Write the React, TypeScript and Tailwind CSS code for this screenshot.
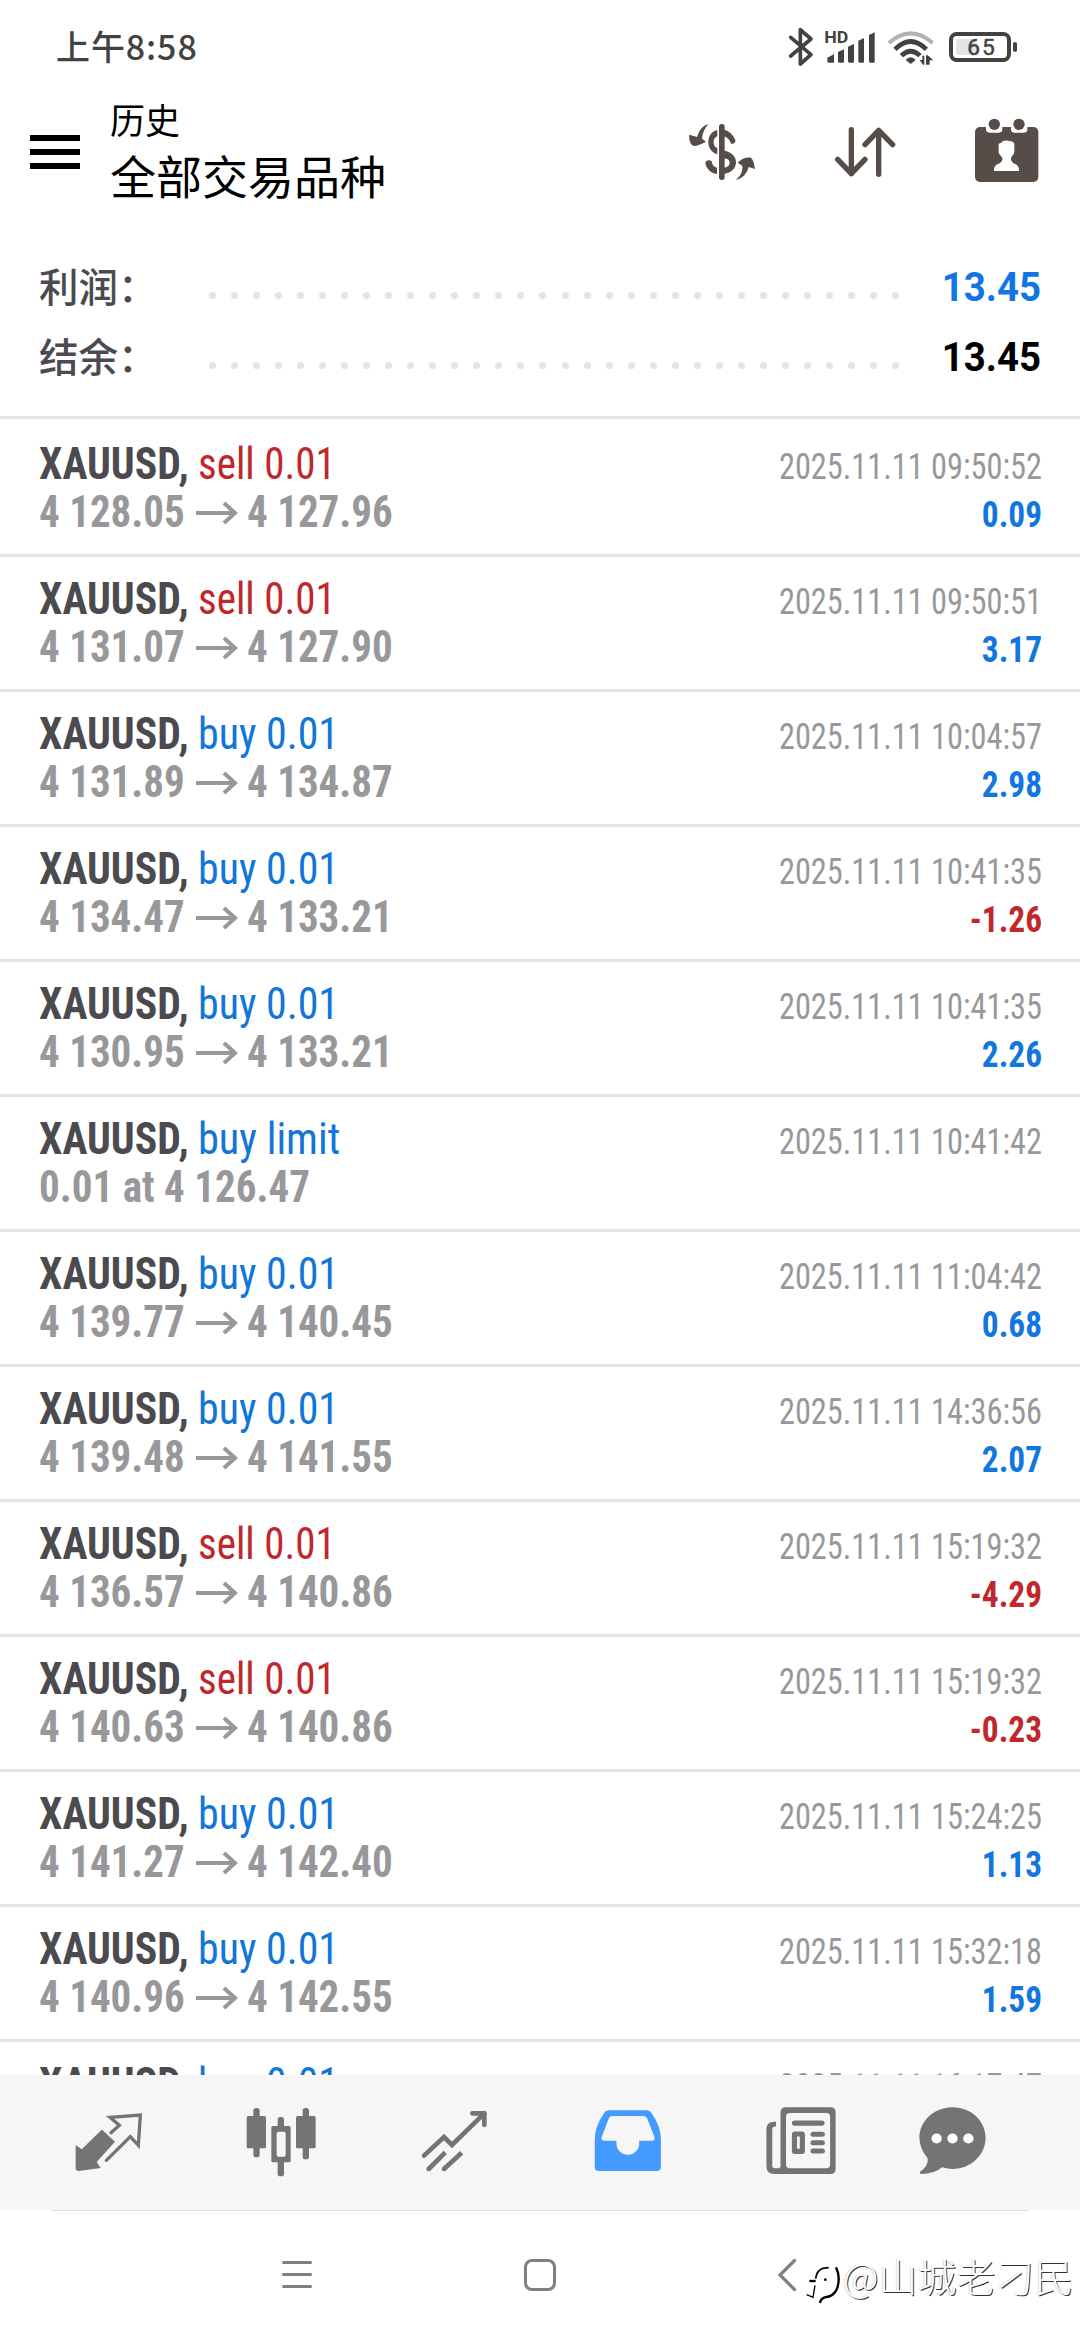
import type { ReactNode } from "react";

type Deal = {
  side: "sell" | "buy";
  label: string;
  from?: string;
  to?: string;
  note?: string;
  time: string;
  profit?: string;
};

const deals: Deal[] = [
  { side: "sell", label: "sell 0.01", from: "4 128.05", to: "4 127.96", time: "2025.11.11 09:50:52", profit: "0.09" },
  { side: "sell", label: "sell 0.01", from: "4 131.07", to: "4 127.90", time: "2025.11.11 09:50:51", profit: "3.17" },
  { side: "buy", label: "buy 0.01", from: "4 131.89", to: "4 134.87", time: "2025.11.11 10:04:57", profit: "2.98" },
  { side: "buy", label: "buy 0.01", from: "4 134.47", to: "4 133.21", time: "2025.11.11 10:41:35", profit: "-1.26" },
  { side: "buy", label: "buy 0.01", from: "4 130.95", to: "4 133.21", time: "2025.11.11 10:41:35", profit: "2.26" },
  { side: "buy", label: "buy limit", note: "0.01 at 4 126.47", time: "2025.11.11 10:41:42" },
  { side: "buy", label: "buy 0.01", from: "4 139.77", to: "4 140.45", time: "2025.11.11 11:04:42", profit: "0.68" },
  { side: "buy", label: "buy 0.01", from: "4 139.48", to: "4 141.55", time: "2025.11.11 14:36:56", profit: "2.07" },
  { side: "sell", label: "sell 0.01", from: "4 136.57", to: "4 140.86", time: "2025.11.11 15:19:32", profit: "-4.29" },
  { side: "sell", label: "sell 0.01", from: "4 140.63", to: "4 140.86", time: "2025.11.11 15:19:32", profit: "-0.23" },
  { side: "buy", label: "buy 0.01", from: "4 141.27", to: "4 142.40", time: "2025.11.11 15:24:25", profit: "1.13" },
  { side: "buy", label: "buy 0.01", from: "4 140.96", to: "4 142.55", time: "2025.11.11 15:32:18", profit: "1.59" },
  { side: "buy", label: "buy 0.01", time: "2025.11.11 16:17:47" },
];

function StatusBar() {
  return (
    <div className="flex h-[92px] shrink-0 items-start pl-[56px] pr-[61px] text-[#424242]">
      <div className="mt-[22px] flex-1 whitespace-nowrap text-[34px] font-medium leading-[48px] tracking-[0.9px]">上午8:58</div>
      <svg className="mt-[26px] h-[42px] w-[28px]" viewBox="21 18 84 126" fill="none" stroke="currentColor" strokeWidth="11" strokeLinejoin="round" strokeLinecap="round">
        <path d="M32 52 L93 104 L61 132 V29 L93 57 L32 108" />
      </svg>
      <svg className="ml-[8px] mt-[28px] h-[37px] w-[54px]" viewBox="129 24 162 111" fill="currentColor">
        <text x="133" y="69" fontFamily="Roboto, sans-serif" fontWeight="700" fontSize="47" textLength="72" lengthAdjust="spacingAndGlyphs">HD</text>
        <path d="M142 113 L162 103 V128 H146 Q142 128 142 124Z" />
        <path d="M174 96 L192 88 V125 Q192 128 189 128 H178 Q174 128 174 124Z" />
        <path d="M204 80 L222 72 V125 Q222 128 219 128 H208 Q204 128 204 124Z" />
        <path d="M235 62 L252 54 V125 Q252 128 249 128 H239 Q235 128 235 124Z" />
        <path d="M267 45 L284 37 V125 Q284 128 281 128 H271 Q267 128 267 124Z" />
      </svg>
      <svg className="ml-[9px] mt-[29px] h-[37px] w-[50px]" viewBox="318 27 150 111" fill="none" stroke="currentColor">
        <path d="M327 69 Q392 11 458 69" stroke="#b3b3b3" strokeWidth="12" />
        <path d="M345 88 Q392 41 439 88" strokeWidth="14" />
        <path d="M364 107 Q392 80 420 107" strokeWidth="14" />
        <path d="M377 120 Q392 103 407 120 L392 132Z" fill="currentColor" stroke="none" />
        <path d="M419 120 H427 V107 H433 V134 H429Z M438 106 H443 L460 121 H449 V134 H438Z" fill="currentColor" stroke="none" />
      </svg>
      <svg className="ml-[11px] mt-[30px] h-[34px] w-[72px]" viewBox="501 30 216 102" fill="none">
        <rect x="528" y="57" width="62" height="48" rx="8" fill="#e4e4e4" />
        <rect x="513" y="42" width="174" height="78" rx="17" stroke="currentColor" strokeWidth="12" />
        <rect x="699" y="67" width="12" height="28" rx="4" fill="currentColor" />
        <text x="562" y="106" fontFamily="Roboto, sans-serif" fontSize="68" fill="currentColor" stroke="currentColor" strokeWidth="1.5" textLength="82">65</text>
      </svg>
    </div>
  );
}

function Header() {
  return (
    <header className="flex h-[120px] shrink-0 items-start pl-[30px] pr-[40px]">
      <div className="mt-[43px] flex w-[50px] flex-col gap-[8px]">
        <div className="h-[6px] bg-black" />
        <div className="h-[6px] bg-black" />
        <div className="h-[6px] bg-black" />
      </div>
      <div className="ml-[30px] flex-1 whitespace-nowrap pt-px text-black">
        <div className="text-[35px] leading-[52px]">历史</div>
        <div className="-mt-px text-[46px] leading-[60px]">全部交易品种</div>
      </div>
      <svg className="mt-[30px] h-[60px] w-[70px] text-[#564d49]" viewBox="81 66 210 180" fill="currentColor">
        <rect x="177" y="72" width="17" height="168" rx="8" />
        <path d="M172 90 C155 94 145 108 145 126 C145 144 155 157 172 163 V144 C163 141 161 133 161 126 C161 118 164 112 172 109Z" />
        <path d="M192 89 C206 92 220 104 226 120 C228 127 220 133 213 131 C208 118 202 112 192 109Z" />
        <path d="M192 152 C215 155 228 170 228 187 C228 204 215 219 192 222 V203 C204 201 209 195 209 188 C209 180 202 176 192 175Z" />
        <path d="M171 222 C151 219 138 204 136 188 C139 179 150 179 155 184 C156 194 161 201 171 203Z" />
        <path d="M145 73 C130 76 119 88 111 111 L88 104 C86 118 91 130 97 136 C104 141 119 134 138 125 L126 116 C128 98 134 85 145 73Z" />
        <path d="M228 239 C244 225 248 215 247 197 L233 188 C244 177 258 171 273 173 C280 179 283 194 285 207 L266 201 C261 220 247 237 228 239Z" />
      </svg>
      <svg className="ml-[76px] mt-[30px] h-[60px] w-[64px] text-[#564d49]" viewBox="519 66 192 180" fill="none" stroke="currentColor" strokeWidth="16" strokeLinecap="round" strokeLinejoin="round">
        <path d="M574 89 V221 M533 178 L574 221 L615 178" />
        <path d="M656 223 V91 M615 134 L656 91 L698 134" />
      </svg>
      <svg className="ml-[76px] mt-[25px] h-[67px] w-[67px]" viewBox="939 51 201 201" fill="#564d49">
        <rect x="945" y="81" width="190" height="165" rx="15" />
        <path d="M978 78 H1027 V88 Q1027 98 1017 98 H988 Q978 98 978 88Z M1053 78 H1102 V88 Q1102 98 1092 98 H1063 Q1053 98 1053 88Z" fill="#fff" />
        <circle cx="1003" cy="73" r="17" />
        <circle cx="1077" cy="73" r="17" />
        <path d="M1016 131 Q1026 129 1029 123 Q1040 119 1052 124 Q1060 124 1063 131 V151 Q1064 160 1058 166 L1053 173 V180 Q1057 190 1067 193 Q1078 198 1077 213 H1002 Q1001 198 1012 193 Q1024 189 1027 180 V173 L1020 165 Q1014 158 1016 151Z" fill="#fff" />
      </svg>
    </header>
  );
}

function SummaryRow({ label, value, tone }: { label: string; value: string; tone: string }) {
  return (
    <div className="flex h-[70px] items-center">
      <div className="w-[170px] text-[39.5px] font-medium leading-[70px] text-[#4b4b4f]">{label}</div>
      <div className="flex w-[690px] justify-between pt-[21px]">
        {Array.from({ length: 32 }, (_, i) => (
          <div key={i} className="size-[7px] rounded-full bg-[#e4e4e4]" />
        ))}
      </div>
      <div className={`flex-1 origin-right scale-x-[0.96] pt-[6px] text-right font-[Roboto,sans-serif] text-[40px] font-bold leading-[64px] ${tone}`}>{value}</div>
    </div>
  );
}

const labelScale: Record<string, string> = {
  "sell 0.01": "scale-x-[0.932]",
  "buy 0.01": "scale-x-[0.952]",
  "buy limit": "scale-x-[0.962]",
};

function DealRow({ deal }: { deal: Deal }) {
  const sideTone = deal.side === "sell" ? "text-[#c0272b]" : "text-[#1176d8]";
  const profitTone = deal.profit?.startsWith("-") ? "text-[#c0272b]" : "text-[#1176dd]";
  return (
    <div className="flex h-[135px] shrink-0 justify-between whitespace-nowrap border-b-[3px] border-[#e4e4e4] pl-[39px] pr-[38px] leading-[48px]">
      <div className="pt-[18px] text-[44px]">
        <div className="flex h-[48px]">
          <div className="w-[159px] origin-left scale-x-[0.95] font-bold text-[#4b4b4f]">XAUUSD,</div>
          <div className={`origin-left ${labelScale[deal.label]} ${sideTone}`}>{deal.label}</div>
        </div>
        <div className="flex h-[48px] font-bold text-[#98989b]">
          {deal.note && <div className="origin-left scale-x-[0.933]">{deal.note}</div>}
          {deal.from && (
            <>
              <div className="w-[157px] origin-left scale-x-[0.932]">{deal.from}</div>
              <svg className="mt-[13px] h-[24px] w-[42px]" viewBox="0 0 42 24" fill="none" stroke="currentColor" strokeWidth="4">
                <path d="M0 12 H40 M28 2 L39 12 L28 22" />
              </svg>
              <div className="ml-[9px] origin-left scale-x-[0.932]">{deal.to}</div>
            </>
          )}
        </div>
      </div>
      <div className="pt-[21px] text-right text-[37px]">
        <div className="origin-right scale-x-[0.874] text-[#98989b]">{deal.time}</div>
        <div className={`origin-right scale-x-[0.9] font-bold ${profitTone}`}>{deal.profit}</div>
      </div>
    </div>
  );
}

function Tab({ className, viewBox, children }: { className: string; viewBox: string; children: ReactNode }) {
  return (
    <svg className={className} viewBox={viewBox} preserveAspectRatio="none">
      {children}
    </svg>
  );
}

function TabBar() {
  return (
    <nav className="flex h-[135px] shrink-0 items-start bg-[#f6f6f6] pl-[74px] text-[#747474]">
      <Tab className="mt-[37px] h-[60px] w-[69px]" viewBox="42 66 207 180">
        <path d="M127 120 L165 155 L110 216 L122 234 L56 243 Q47 243 47 235 V165 L65 178 L122 122 Q125 118 127 120Z" fill="currentColor" />
        <path d="M153 128 L178 106 L150 82 L241 75 L235 166 L211 140 L139 211" fill="none" stroke="currentColor" strokeWidth="10" strokeLinecap="round" />
      </Tab>
      <Tab className="ml-[101px] mt-[31px] h-[72px] w-[74px]" viewBox="552 48 222 216">
        <g fill="currentColor">
          <rect x="580" y="54" width="19" height="148" rx="8" />
          <rect x="560" y="78" width="58" height="97" rx="5" />
          <rect x="728" y="54" width="19" height="154" rx="8" />
          <rect x="708" y="78" width="59" height="97" rx="5" />
          <rect x="653" y="81" width="19" height="178" rx="8" />
          <rect x="634" y="108" width="58" height="109" rx="5" />
        </g>
        <rect x="650" y="125" width="27" height="75" rx="6" fill="#f6f6f6" />
      </Tab>
      <Tab className="ml-[102px] mt-[33px] h-[65px] w-[69px]" viewBox="1080 54 207 195">
        <g fill="none" stroke="currentColor" strokeWidth="14" strokeLinejoin="miter">
          <path d="M1092 197 L1152 141 L1176 165 L1273 70" strokeLinecap="round" />
          <path d="M1237 70 H1273 V105" strokeLinecap="round" strokeLinejoin="round" />
          <path d="M1106 237 L1156 187 M1152 237 L1205 188" />
        </g>
        <circle cx="1106" cy="237" r="7" fill="currentColor" />
        <circle cx="1152" cy="237" r="7" fill="currentColor" />
      </Tab>
      <Tab className="ml-[103px] mt-[33px] h-[65.3px] w-[72px]" viewBox="150 235 209 196">
        <path d="M200 242 H308 Q318 242 324 252 Q350 290 350 330 V412 Q350 424 338 424 H170 Q158 424 158 412 V330 Q158 290 184 252 Q190 242 200 242Z" fill="#439bff" />
        <path d="M210 259 H298 Q307 259 311 268 L331 322 Q334 333 324 333 H287 V342 A33 33 0 0 1 221 342 V333 H185 Q175 333 178 323 L198 268 Q201 259 210 259Z" fill="#f6f6f6" />
      </Tab>
      <Tab className="ml-[100px] mt-[30px] h-[71px] w-[74px]" viewBox="650 226 215 212">
        <path d="M714 233 H843 Q858 233 858 248 V417 Q858 432 843 432 H680 Q657 432 657 408 V298 Q657 276 680 276 H685 V290 H680 Q674 292 674 298 V408 Q674 414 680 415 H692 Q698 415 698 408 V248 Q698 233 714 233Z" fill="currentColor" />
        <rect x="714" y="250" width="128" height="165" rx="11" fill="#f6f6f6" />
        <g fill="currentColor">
          <rect x="731" y="272" width="95" height="16" rx="8" />
          <path d="M740 305 H760 Q769 305 769 314 V363 Q769 372 760 372 H740 Q731 372 731 363 V314 Q731 305 740 305Z M746 320 V357 H754 V320Z" fillRule="evenodd" />
          <rect x="785" y="306" width="42" height="15" rx="7.5" />
          <rect x="785" y="331" width="42" height="15" rx="7.5" />
          <rect x="785" y="356" width="42" height="15" rx="7.5" />
        </g>
      </Tab>
      <Tab className="ml-[79px] mt-[30px] h-[71px] w-[71px]" viewBox="1096 226 206 212">
        <path d="M1199 233 C1254 233 1295 275 1295 324 C1295 374 1254 417 1199 417 Q1184 417 1169 412 Q1146 432 1108 432 Q1103 431 1104 426 Q1130 408 1127 385 Q1103 357 1103 324 C1103 275 1145 233 1199 233Z" fill="currentColor" />
        <g fill="#fff">
          <circle cx="1153" cy="326" r="15" />
          <circle cx="1199" cy="326" r="15" />
          <circle cx="1245" cy="326" r="15" />
        </g>
      </Tab>
    </nav>
  );
}

function SystemNav() {
  return (
    <div className="relative flex h-[130px] shrink-0 items-start pl-[282px] text-[#808080]">
      <div className="absolute left-[52px] top-0 h-px w-[976px] bg-[#dfdfdf]" />
      <div className="mt-[51px] flex w-[30px] flex-col gap-[9px]">
        <div className="h-[3px] rounded-full bg-[#808080]" />
        <div className="h-[3px] rounded-full bg-[#808080]" />
        <div className="h-[3px] rounded-full bg-[#808080]" />
      </div>
      <div className="ml-[212px] mt-[49px] h-[32px] w-[32px] rounded-[8px] border-[3px] border-[#808080]" />
      <svg className="ml-[222px] mt-[48px] h-[34px] w-[19px]" viewBox="0 0 19 34" fill="none" stroke="currentColor" strokeWidth="3.2" strokeLinecap="round">
        <path d="M16.5 2.5 L2 17 L16.5 31.5" />
      </svg>
      <svg className="absolute left-[804px] top-[54px] h-[54px] w-[40px]" viewBox="72 42 120 162" fill="none">
        <path d="M88 93 H107" stroke="#000" strokeWidth="7" />
        <path d="M107 86 Q110 62 128 55 L146 53" stroke="#000" strokeWidth="5" />
        <path d="M105 106 L99 142 L80 134" stroke="#000" strokeWidth="4" />
        <path d="M168 52 Q182 80 172 114 Q162 140 134 142 Q122 146 120 159" stroke="#000" strokeWidth="7" />
        <circle cx="136" cy="89" r="4" fill="#000" />
      </svg>
      <div className="absolute left-[843px] top-[37px] whitespace-nowrap text-[39px] font-light leading-[56px] text-white [text-shadow:1px_1px_0_#333,-1px_0_0_#dcdcdc]">
        @山城老刁民
      </div>
    </div>
  );
}

export default function App() {
  return (
    <div className="flex h-[2340px] w-[1080px] flex-col overflow-hidden bg-white font-['Noto_Sans_CJK_SC',sans-serif]">
      <StatusBar />
      <Header />
      <section className="h-[207px] shrink-0 border-b-[3px] border-[#e4e4e4] pl-[39px] pr-[39px] pt-[38px]">
        <SummaryRow label="利润：" value="13.45" tone="text-[#1176e4]" />
        <SummaryRow label="结余：" value="13.45" tone="text-black" />
      </section>
      <main className="flex min-h-0 flex-1 flex-col overflow-hidden pt-[3px] font-['Roboto_Condensed',sans-serif]">
        {deals.map((deal, i) => (
          <DealRow key={i} deal={deal} />
        ))}
      </main>
      <TabBar />
      <SystemNav />
    </div>
  );
}
